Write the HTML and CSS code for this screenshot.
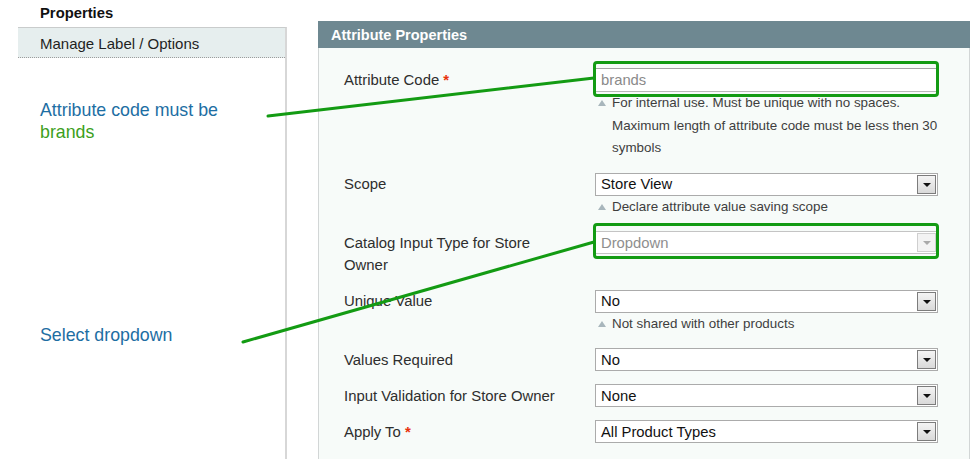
FILE: index.html
```html
<!DOCTYPE html>
<html lang="en">
<head>
<meta charset="utf-8">
<title>Attribute Properties</title>
<link rel="stylesheet" href="styles.css">
</head>
<body>
<div class="page">
  <aside class="sidebar">
    <h3 class="side-title">Properties</h3>
    <div class="tabs">
      <div class="tab">Manage Label / Options</div>
      <p class="annot annot-code">Attribute code must be<br><span class="annot-green">brands</span></p>
      <p class="annot annot-select">Select dropdown</p>
    </div>
  </aside>

  <main class="main">
    <section class="panel">
      <div class="panel-head">Attribute Properties</div>
      <div class="panel-body">

        <div class="form-row">
          <div class="label">Attribute Code <span class="req">*</span></div>
          <div class="control">
            <div class="hl"><div class="input">brands</div></div>
            <p class="note">For internal use. Must be unique with no spaces.<br>Maximum length of attribute code must be less then 30<br>symbols</p>
          </div>
        </div>

        <div class="form-row">
          <div class="label">Scope</div>
          <div class="control">
            <div class="select"><span>Store View</span><span class="arrow"></span></div>
            <p class="note">Declare attribute value saving scope</p>
          </div>
        </div>

        <div class="form-row">
          <div class="label">Catalog Input Type for Store<br>Owner</div>
          <div class="control">
            <div class="hl hl-select"><div class="select disabled"><span>Dropdown</span><span class="arrow"></span></div></div>
          </div>
        </div>

        <div class="form-row">
          <div class="label">Unique Value</div>
          <div class="control">
            <div class="select"><span>No</span><span class="arrow"></span></div>
            <p class="note">Not shared with other products</p>
          </div>
        </div>

        <div class="form-row">
          <div class="label">Values Required</div>
          <div class="control">
            <div class="select"><span>No</span><span class="arrow"></span></div>
          </div>
        </div>

        <div class="form-row">
          <div class="label">Input Validation for Store Owner</div>
          <div class="control">
            <div class="select"><span>None</span><span class="arrow"></span></div>
          </div>
        </div>

        <div class="form-row">
          <div class="label">Apply To <span class="req">*</span></div>
          <div class="control">
            <div class="select"><span>All Product Types</span><span class="arrow"></span></div>
          </div>
        </div>

      </div>
    </section>
  </main>
</div>

<svg class="callouts" width="973" height="459" viewBox="0 0 973 459" aria-hidden="true">
  <line x1="268" y1="116" x2="594" y2="78" />
  <line x1="243" y1="342" x2="594" y2="242" />
</svg>
</body>
</html>
```

FILE: styles.css
```css
html, body {
  margin: 0;
  padding: 0;
  height: 459px;
  overflow: hidden;
  background: #ffffff;
}

body {
  font-family: "Liberation Sans", Arial, sans-serif;
  color: #2e2e2e;
  position: relative;
}

.page {
  display: flex;
  align-items: flex-start;
  height: 459px;
}

/* ---------- sidebar ---------- */
.sidebar {
  width: 269px;
  margin-left: 18px;
  flex: none;
  display: flex;
  flex-direction: column;
  height: 459px;
}

.side-title {
  margin: 0;
  height: 27px;
  line-height: 27px;
  padding-left: 22px;
  font-size: 14.8px;
  font-weight: bold;
  color: #111;
}

.tabs {
  flex: 1;
  border-top: 1px solid #c9cccc;
  border-right: 2px solid #d7d7d7;
}

.tab {
  height: 29px;
  line-height: 32px;
  padding-left: 22px;
  font-size: 15px;
  color: #1f1f1f;
  background: #e6eeee;
  border-bottom: 1px dotted #9c9c9c;
}

.annot {
  margin: 0;
  padding-left: 22px;
  font-size: 17.8px;
  line-height: 22px;
  color: #1d6ea3;
}

.annot-code {
  margin-top: 41px;
}

.annot-green {
  color: #3c9f21;
}

.annot-select {
  margin-top: 181px;
}

/* ---------- main panel ---------- */
.main {
  margin-left: 31px;
  margin-top: 21px;
  width: 652px;
  flex: none;
}

.panel-head {
  height: 27px;
  line-height: 28px;
  padding-left: 13px;
  background: #6e8891;
  color: #ffffff;
  font-size: 14.5px;
  font-weight: bold;
}

.panel-body {
  background: #f7fbf9;
  border-left: 1px solid #d2d6d6;
  border-right: 1px solid #d2d6d6;
  padding: 20px 0 0 25px;
  height: 420px;
  box-sizing: border-box;
}

.form-row {
  display: grid;
  grid-template-columns: 251px 343px;
  margin-bottom: 13px;
}

.label {
  font-size: 14.9px;
  line-height: 22.5px;
  color: #2e2e2e;
  padding-top: 0.5px;
}

.req {
  color: #e8320c;
  font-weight: bold;
}

.control {
  display: flex;
  flex-direction: column;
}

.input {
  height: 24px;
  box-sizing: border-box;
  border: 1px solid #b8b8b8;
  border-top-color: #a4a4a4;
  background: #ffffff;
  padding-left: 5px;
  font-size: 14.8px;
  line-height: 22px;
  color: #8a8a8a;
}

.select {
  height: 23px;
  box-sizing: border-box;
  border: 1px solid #ababab;
  background: #ffffff;
  padding-left: 5px;
  display: flex;
  align-items: center;
  justify-content: space-between;
  font-size: 14.8px;
  color: #111;
}

.arrow {
  width: 17px;
  height: 17px;
  margin-right: 1px;
  border: 1px solid #7c7c7c;
  background: linear-gradient(#f4f4f4, #d9d9d9);
  display: flex;
  align-items: center;
  justify-content: center;
}

.arrow::before {
  content: "";
  border-left: 4px solid transparent;
  border-right: 4px solid transparent;
  border-top: 4px solid #111;
  margin-top: 1px;
}

.select.disabled {
  color: #8e8e8e;
  border-color: #c4c4c4;
}

.select.disabled .arrow {
  border-color: #cfcfcf;
  background: #f3f3f3;
}

.select.disabled .arrow::before {
  border-top-color: #a9a9a9;
}

.note {
  position: relative;
  margin: 0;
  padding-left: 17px;
  font-size: 13.4px;
  line-height: 22.5px;
  color: #3e3e3e;
}

.note::before {
  content: "";
  position: absolute;
  left: 3px;
  top: 8px;
  border-left: 4px solid transparent;
  border-right: 4px solid transparent;
  border-bottom: 6px solid #a8b6bc;
}

/* green highlight frames */
.hl {
  position: relative;
}

.hl::after {
  content: "";
  position: absolute;
  top: -7px;
  bottom: -5px;
  left: -2px;
  right: -1px;
  border: 3px solid #139b13;
  border-radius: 4px;
  pointer-events: none;
}

.hl-select::after {
  top: -8px;
}

/* callout lines */
.callouts {
  position: absolute;
  top: 0;
  left: 0;
  pointer-events: none;
}

.callouts line {
  stroke: #139b13;
  stroke-width: 3;
  stroke-linecap: round;
}
```
